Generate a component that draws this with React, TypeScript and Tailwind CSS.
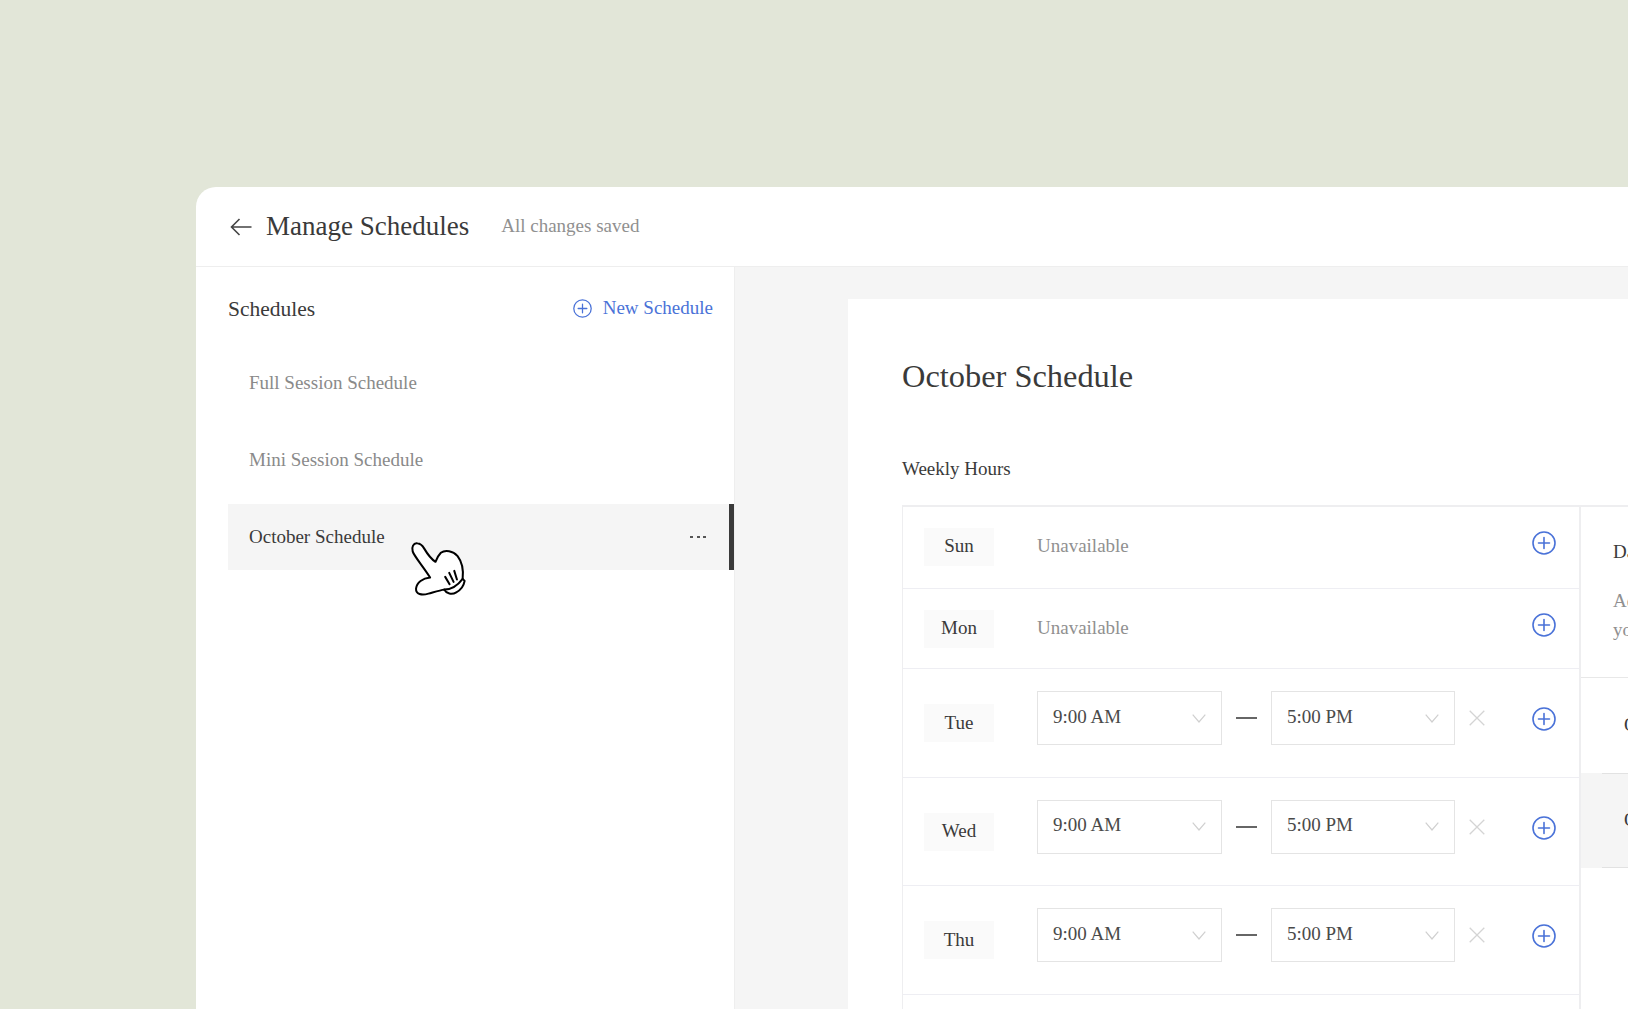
import React from "react";

const font = { fontFamily: '"Liberation Serif", "Times New Roman", serif' };

function PlusCircle({ size = 24, className = "" }: { size?: number; className?: string }) {
  return (
    <svg width={size} height={size} viewBox="0 0 24 24" fill="none" stroke="#4a72d8" strokeWidth="1.6" strokeLinecap="round" className={className}>
      <circle cx="12" cy="12" r="11" />
      <path d="M12 6.500v11M6.500 12h11" />
    </svg>
  );
}

function Chevron() {
  return (
    <svg width="14" height="9" viewBox="0 0 14 9" fill="none" stroke="#d0d0d0" strokeWidth="1.200" className="shrink-0">
      <path d="M0.700 0.700 7 8 13.300 0.700" />
    </svg>
  );
}

function TimeSelect({ value, w }: { value: string; w: string }) {
  return (
    <div className={`${w} h-[54px] border border-[#e4e4e4] flex items-center justify-between pl-[15px] pr-[15px] text-[19px] text-[#4a4a4a]`}>
      <span className="relative -top-[1px]">{value}</span>
      <Chevron />
    </div>
  );
}

function DayLabel({ day }: { day: string }) {
  return (
    <div className="w-[70px] h-[38px] bg-[#fafafa] flex items-center justify-center text-[19px] text-[#3a3a3a] shrink-0">
      {day}
    </div>
  );
}

function UnavailableRow({ day, h }: { day: string; h: string }) {
  return (
    <div className={`${h} border-b border-[#eeeef3] flex items-center pl-[21px] pr-[23px]`}>
      <DayLabel day={day} />
      <span className="ml-[43px] text-[19px] text-[#909090]">Unavailable</span>
      <PlusCircle className="ml-auto relative -top-[4px]" />
    </div>
  );
}

function HoursRow({ day, labelOffset }: { day: string; labelOffset: string }) {
  return (
    <div className="h-[108.500px] border-b border-[#eeeef3] flex items-start pl-[21px] pr-[23px] pt-[22px]">
      <div className={labelOffset}>
        <DayLabel day={day} />
      </div>
      <div className="ml-[43px]">
        <TimeSelect value="9:00 AM" w="w-[185px]" />
      </div>
      <div className="w-[21px] h-[2px] bg-[#666] ml-[14px] mr-[14px] mt-[26px]" />
      <TimeSelect value="5:00 PM" w="w-[184px]" />
      <svg width="16" height="16" viewBox="0 0 16 16" fill="none" stroke="#d4d4d4" strokeWidth="1.3" className="ml-[14px] mt-[19px]">
        <path d="M0.700 0.700 15.300 15.300M15.300 0.700 0.700 15.300" />
      </svg>
      <PlusCircle className="ml-auto mt-[16px]" />
    </div>
  );
}

function HandCursor() {
  return (
    <svg
      width="57"
      height="57"
      viewBox="90 60 170 170"
      fill="#fff"
      stroke="#000"
      strokeWidth="6"
      strokeLinejoin="round"
      strokeLinecap="round"
      className="absolute left-[182px] top-[36px] z-10"
    >
      <path d="M112 70C100 68 94 82 98 94C102 108 130 140 150 172C128 174 110 186 108 205C107 222 125 226 145 220C160 216 180 210 192 208C198 220 215 224 228 216C240 210 250 198 253 182L247 176C250 150 245 125 232 108C218 92 195 88 182 98C176 104 170 115 166 125C155 118 142 102 132 85C126 75 120 71 112 70Z" />
      <path d="M192 208C215 208 235 192 247 176" fill="none" />
      <path d="M195 170 208 192M207 158 220 185M222 152 230 178" fill="none" />
    </svg>
  );
}

function SidebarItem({ label }: { label: string }) {
  return (
    <div className="h-[66px] flex items-center pl-[21px] text-[19px] text-[#8a8a8a]">{label}</div>
  );
}

export default function App() {
  return (
    <div className="w-[1628px] h-[1009px] bg-[#e2e6d8] overflow-hidden pl-[196px] pt-[187px]" style={font}>
      <div className="w-[1500px] h-[900px] bg-white rounded-tl-[20px]">
        <header className="h-[80px] border-b border-[#eeeeee] flex items-center pl-[34px]">
          <svg width="22" height="18" viewBox="0 0 22 18" fill="none" stroke="#444" strokeWidth="1.6" className="shrink-0">
            <path d="M21.500 9H1.500M9.500 1 1.500 9l8 8" />
          </svg>
          <h1 className="ml-[14px] text-[27px] font-normal text-[#3a3a3a]">Manage Schedules</h1>
          <span className="ml-[32px] text-[19px] text-[#909090]">All changes saved</span>
        </header>
        <div className="flex h-[820px]">
          <aside className="w-[539px] shrink-0 pl-[32px] pt-[26px] border-r border-[#eeeeee]">
            <div className="flex items-center justify-between pr-[21px] h-[33px]">
              <span className="text-[21.500px] text-[#3a3a3a]">Schedules</span>
              <div className="flex items-center text-[#4a72d8] text-[19px] relative -top-[1px]">
                <PlusCircle size={19} />
                <span className="ml-[11px]">New Schedule</span>
              </div>
            </div>
            <div className="mt-[24px] flex flex-col gap-[11px]">
              <SidebarItem label="Full Session Schedule" />
              <SidebarItem label="Mini Session Schedule" />
              <div className="relative h-[66px] bg-[#f5f5f5] flex items-center pl-[21px] text-[19px] text-[#3a3a3a] border-r-[5px] border-[#3a3a3a]">
                <span>October Schedule</span>
                <div className="ml-auto mr-[23px] flex gap-[3.500px]">
                  <span className="w-[3px] h-[2px] bg-[#555]" />
                  <span className="w-[3px] h-[2px] bg-[#555]" />
                  <span className="w-[3px] h-[2px] bg-[#555]" />
                </div>
                <HandCursor />
              </div>
            </div>
          </aside>
          <main className="flex-1 bg-[#f5f5f5] pl-[113px] pt-[32px]">
            <div className="h-[800px] bg-white pl-[54px] pt-[59px] overflow-hidden">
              <h2 className="text-[32.400px] leading-[36px] font-normal text-[#3a3a3a]">October Schedule</h2>
              <h3 className="mt-[64px] text-[19px] leading-[22px] font-normal text-[#3a3a3a]">Weekly Hours</h3>
              <div className="mt-[25px] w-[760px] border-t-2 border-l border-[#eeeef0] flex">
                <div className="w-[678px] shrink-0 border-r-2 border-[#eeeef0]">
                  <UnavailableRow day="Sun" h="h-[82px] pb-[2px]" />
                  <UnavailableRow day="Mon" h="h-[80px]" />
                  <HoursRow day="Tue" labelOffset="mt-[13px]" />
                  <HoursRow day="Wed" labelOffset="mt-[13px]" />
                  <HoursRow day="Thu" labelOffset="mt-[13px]" />
                  <div className="h-[108px]" />
                </div>
                <div className="flex-1 min-w-0 overflow-hidden">
                  <div className="h-[171px] border-b border-[#e8e8e8] pl-[32px] pt-[34px] whitespace-nowrap">
                    <div className="text-[19px] leading-[22px] text-[#3a3a3a]">Date Overrides</div>
                    <div className="mt-[23px] text-[19px] leading-[29px] text-[#909090]">
                      Add dates when
                      <br />
                      your availability
                    </div>
                  </div>
                  <div className="h-[95px] pl-[43px] flex items-center whitespace-nowrap text-[19px] text-[#3a3a3a]">
                    <span>Oct 12</span>
                  </div>
                  <div className="h-[95px] bg-[#f5f5f5] flex flex-col whitespace-nowrap text-[19px] text-[#3a3a3a]">
                    <div className="ml-[21px] h-px bg-[#e2e2e2]" />
                    <div className="flex-1 flex items-center pl-[43px]">
                      <span>Oct 20</span>
                    </div>
                    <div className="ml-[21px] h-px bg-[#e2e2e2]" />
                  </div>
                </div>
              </div>
            </div>
          </main>
        </div>
      </div>
    </div>
  );
}
